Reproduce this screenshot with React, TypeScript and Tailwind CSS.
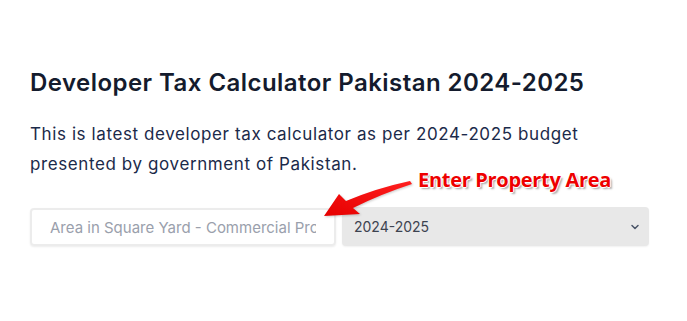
import { ChevronDown } from 'lucide-react';

const Arrow = () => (
  <svg
    className="absolute left-[315px] top-[170px] drop-shadow-[1px_1px_1px_rgba(0,0,0,0.2)]"
    width="105"
    height="55"
    viewBox="0 0 105 55"
  >
    <defs>
      <linearGradient id="ar" x1="0" y1="1" x2="1" y2="0">
        <stop offset="0" stopColor="#e60000" />
        <stop offset="1" stopColor="#ff2020" />
      </linearGradient>
    </defs>
    <path
      d="M95 11 L97 14 Q66 24 38 38 L45 44 L9 46 L24 24 L31 31 Q62 18 95 11 Z"
      fill="url(#ar)"
    />
  </svg>
);

const App = () => {
  return (
    <div
      className="relative w-[687px] h-[321px] bg-white overflow-hidden"
      style={{ fontFamily: 'Inter, "Open Sans", sans-serif' }}
    >
      <div className="w-[619px] ml-[30px] pt-[67px]">
        {/* Heading */}
        <h1 className="text-[24px] leading-[32px] font-semibold text-[#141b2d] tracking-[0.45px]">
          Developer Tax Calculator Pakistan 2024-2025
        </h1>

        {/* Description */}
        <p className="mt-[20px] text-[17px] leading-[30px] text-[#1b2a4a] tracking-[0.6px]">
          This is latest developer tax calculator as per 2024-2025 budget
          <br />
          presented by government of Pakistan.
        </p>

        {/* Form row */}
        <div className="mt-[29px] flex gap-[6px]">
          <input
            className="w-[306px] h-[38px] rounded-[4px] border-2 border-[#ececec] px-[18px] text-[15px] text-[#333] placeholder:text-[#9aa0ac] outline-none shadow-[0_1px_2px_rgba(0,0,0,0.08)]"
            placeholder="Area in Square Yard - Commercial Property"
          />
          <div className="w-[307px] h-[39px] -mt-[1px] rounded-[4px] bg-[#e8e8e8] flex items-center justify-between pl-[12px] pr-[8px] text-[14px] text-[#3d4350] shadow-[0_1px_2px_rgba(0,0,0,0.06)]">
            <span>2024-2025</span>
            <ChevronDown className="w-[12px] h-[12px] text-[#4a5568]" strokeWidth={3} />
          </div>
        </div>
      </div>

      {/* Annotation */}
      <div
        className="absolute left-[418px] top-[165px] text-[20px] font-bold text-[#ee0000] tracking-[-0.3px]"
        style={{
          fontFamily: '"Open Sans", sans-serif',
          textShadow:
            '1px 0 0 #fff, -1px 0 0 #fff, 0 1px 0 #fff, 0 -1px 0 #fff, 2px 2px 2px rgba(0,0,0,0.35)',
        }}
      >
        Enter Property Area
      </div>
      <Arrow />
    </div>
  );
};

export default App;
